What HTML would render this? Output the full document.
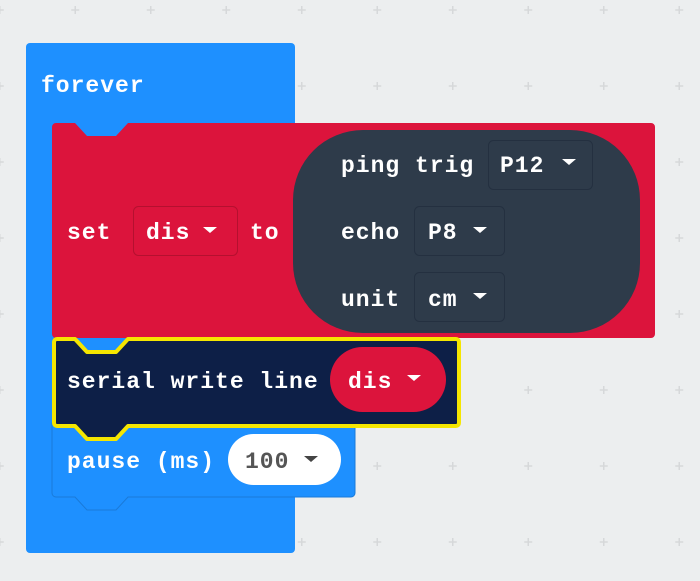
<!DOCTYPE html>
<html><head><meta charset="utf-8"><style>
html,body{margin:0;padding:0;background:#eceeef;width:700px;height:581px;overflow:hidden}
svg{display:block}
text{font-family:"Liberation Mono","DejaVu Sans Mono",monospace;font-weight:bold;font-size:23px;letter-spacing:1px;fill:#fff}
</style></head><body>
<svg width="700" height="581" viewBox="0 0 700 581" xmlns="http://www.w3.org/2000/svg">
<defs>
<pattern id="g" x="37.5" y="-28" width="75.5" height="76" patternUnits="userSpaceOnUse">
<path d="M33.75 38h8M37.75 34v8" stroke="#d6d8da" stroke-width="1.5"/>
</pattern>
</defs>
<rect width="700" height="581" fill="#eceeef"/>
<rect x="0" y="0" width="700" height="581" fill="url(#g)"/>
<!-- forever block -->
<rect x="26" y="43" width="269" height="510" rx="4" fill="#1e90ff"/>
<text x="41" y="92">forever</text>
<!-- red set block -->
<path d="M56 123H75L87 136H116L128 123H651a4 4 0 0 1 4 4V334a4 4 0 0 1-4 4H56a4 4 0 0 1-4-4V127a4 4 0 0 1 4-4z" fill="#dc143c"/>
<text x="67" y="239">set</text>
<rect x="133.5" y="206.5" width="104" height="49" rx="5" fill="#dc143c" stroke="#b5102f"/>
<text x="146" y="239">dis</text>
<path d="M203 227h14l-7 6z" fill="#fff"/>
<text x="250" y="239">to</text>
<!-- dark ping block -->
<rect x="293" y="130" width="347" height="203" rx="70" fill="#2e3b4a"/>
<text x="341" y="172">ping trig</text>
<rect x="488.5" y="140.5" width="104" height="49" rx="5" fill="#2e3b4a" stroke="#243040"/>
<text x="500" y="172">P12</text>
<path d="M562 159h14l-7 6z" fill="#fff"/>
<text x="341" y="239">echo</text>
<rect x="414.5" y="206.5" width="90" height="49" rx="5" fill="#2e3b4a" stroke="#243040"/>
<text x="428" y="239">P8</text>
<path d="M473 227h14l-7 6z" fill="#fff"/>
<text x="341" y="306">unit</text>
<rect x="414.5" y="272.5" width="90" height="49" rx="5" fill="#2e3b4a" stroke="#243040"/>
<text x="428" y="306">cm</text>
<path d="M473 293h14l-7 6z" fill="#fff"/>
<!-- pause block -->
<path d="M56 420H351a4 4 0 0 1 4 4V493a4 4 0 0 1-4 4H128L116 510H87L75 497H56a4 4 0 0 1-4-4V424a4 4 0 0 1 4-4z" fill="#1e90ff" stroke="#1a7ad8" stroke-width="1"/>
<text x="67" y="468">pause (ms)</text>
<rect x="228" y="434" width="113" height="51" rx="25.5" fill="#fff"/>
<text x="245" y="468" style="fill:#555">100</text>
<path d="M304 456h14l-7 6z" fill="#444"/>
<!-- serial block -->
<path d="M57 339H75L87 352H116L128 339H456a3 3 0 0 1 3 3V423a3 3 0 0 1-3 3H128L116 439H87L75 426H57a3 3 0 0 1-3-3V342a3 3 0 0 1 3-3z" fill="#0d1f47" stroke="#f5e600" stroke-width="4" stroke-linejoin="round"/>
<text x="67" y="388">serial write line</text>
<rect x="330" y="347" width="116" height="65" rx="32.5" fill="#dc143c"/>
<text x="348" y="388">dis</text>
<path d="M407 375h14l-7 6z" fill="#fff"/>
</svg>
</body></html>
